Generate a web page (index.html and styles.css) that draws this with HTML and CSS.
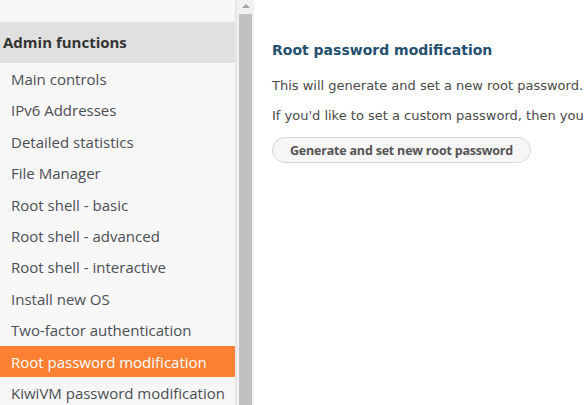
FILE: index.html
```html
<!DOCTYPE html>
<html>
<head>
<meta charset="utf-8">
<link rel="stylesheet" href="styles.css">
</head>
<body>
<div class="layout">
  <div class="sidebar">
    <div class="menu">
      <div class="menu-top"></div>
      <div class="menu-head">Admin functions</div>
      <a class="item">Main controls</a>
      <a class="item">IPv6 Addresses</a>
      <a class="item">Detailed statistics</a>
      <a class="item">File Manager</a>
      <a class="item">Root shell - basic</a>
      <a class="item">Root shell - advanced</a>
      <a class="item">Root shell - interactive</a>
      <a class="item">Install new OS</a>
      <a class="item">Two-factor authentication</a>
      <a class="item active">Root password modification</a>
      <a class="item">KiwiVM password modification</a>
    </div>
    <div class="scrollbar">
      <div class="arrow"></div>
      <div class="thumb"></div>
    </div>
  </div>
  <div class="main">
    <h2 class="title">Root password modification</h2>
    <p class="text">This will generate and set a new root password.</p>
    <p class="text">If you'd like to set a custom password, then you can do it via Root shell.</p>
    <button class="btn">Generate and set new root password</button>
  </div>
</div>
</body>
</html>
```
FILE: styles.css
```css
html, body {
  margin: 0;
  padding: 0;
  background: #fff;
  overflow: hidden;
}
.layout {
  display: flex;
  width: 587px;
  height: 405px;
  overflow: hidden;
}
.sidebar {
  display: flex;
  flex: 0 0 254px;
  height: 405px;
  background: #f1f1f1;
}
.menu {
  width: 235px;
  background: #f7f7f7;
  border-right: 2px solid #e6e6e6;
  overflow: hidden;
  font-family: "Open Sans", "Noto Sans", sans-serif;
}
.menu-top {
  height: 22px;
}
.menu-head {
  height: 41px;
  background: #e0e0e0;
  font-weight: bold;
  font-size: 15px;
  color: #333;
  line-height: 41px;
  padding-left: 3px;
}
.item {
  display: block;
  height: 31.4px;
  line-height: 32px;
  padding-left: 11px;
  font-size: 15px;
  color: #4b4f56;
  white-space: nowrap;
}
.item.active {
  background: #fe8033;
  color: #fff;
}
.scrollbar {
  width: 17px;
  display: flex;
  flex-direction: column;
  align-items: center;
}
.arrow {
  margin-top: 4px;
  width: 0;
  height: 0;
  border-left: 4px solid transparent;
  border-right: 4px solid transparent;
  border-bottom: 4px solid #a3a3a3;
}
.thumb {
  margin-top: 6px;
  width: 13px;
  flex: 1;
  background: #c1c1c1;
}
.main {
  flex: 1;
  padding: 42px 0 0 18px;
  font-family: "DejaVu Sans", Verdana, sans-serif;
  white-space: nowrap;
  overflow: hidden;
}
.title {
  margin: 0 0 20px;
  font-size: 14px;
  font-weight: bold;
  color: #24506f;
  line-height: 16px;
}
.text {
  margin: 0 0 14px;
  font-size: 13px;
  color: #4a4a4a;
  line-height: 16px;
}
.btn {
  display: block;
  margin-top: -1px;
  height: 26px;
  padding: 0 17px;
  border: 1px solid #d8d8d8;
  border-radius: 13px;
  background: #f6f6f6;
  font-family: "Open Sans", "Noto Sans", sans-serif;
  font-weight: bold;
  font-size: 12.5px;
  color: #555;
  letter-spacing: -0.2px;
}
```
